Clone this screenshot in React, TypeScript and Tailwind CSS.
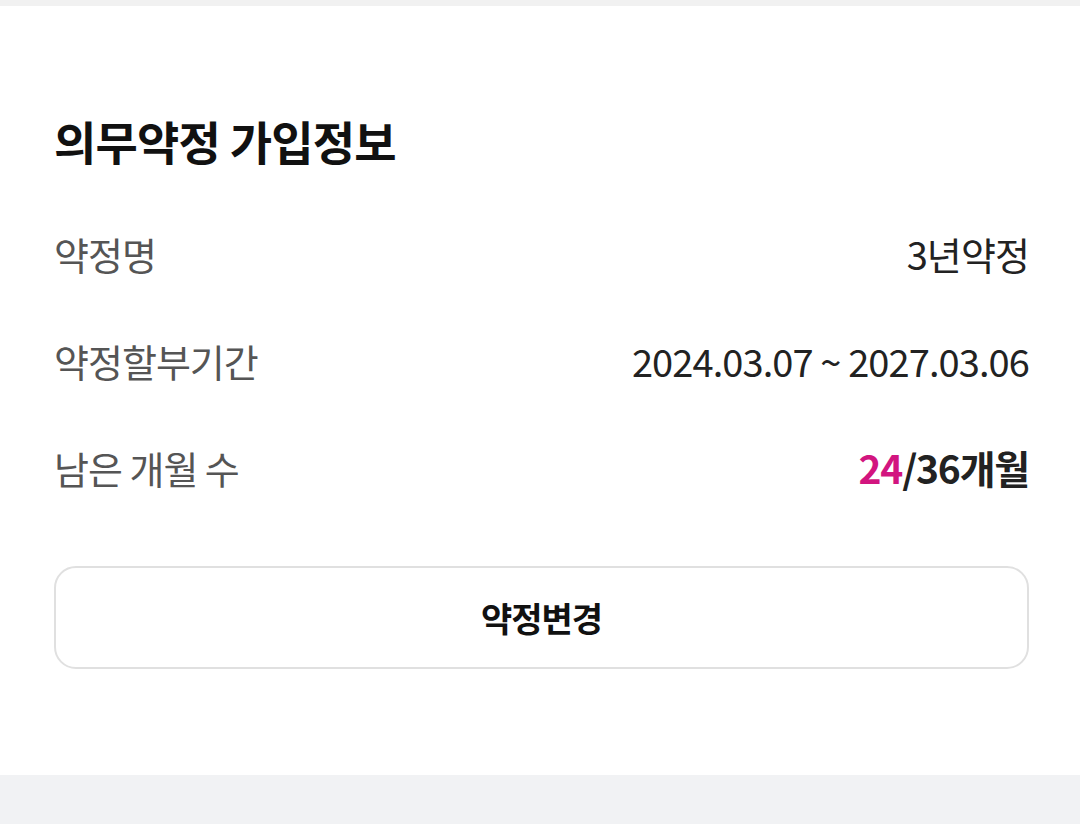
import React from 'react';

const rows = [
  { label: '약정명', value: <span>3년약정</span> },
  { label: '약정할부기간', value: <span>2024.03.07 ~ 2027.03.06</span> },
  {
    label: '남은 개월 수',
    value: (
      <span className="font-bold text-[39px] tracking-[-1.2px]">
        <span className="text-[#d2157f]">24</span>/36개월
      </span>
    ),
  },
];

export default function App() {
  return (
    <div className="min-h-screen bg-[#f1f2f4] font-['Noto_Sans_CJK_KR','Noto_Sans',sans-serif]">
      <div className="h-[6px] bg-[#f1f1f1]" />
      <div className="bg-white pl-[54px] pr-[51px] pt-[106px] pb-[106px]">
        <h1 className="text-[46px] leading-[56px] font-bold text-[#111] tracking-[-0.8px]">의무약정 가입정보</h1>
        <div className="mt-[32px]">
          {rows.map((row) => (
            <div key={row.label} className="h-[107px] flex items-center justify-between">
              <span className="text-[38px] text-[#555] tracking-[-1px]">{row.label}</span>
              <span className="text-[38px] text-[#222] tracking-[-0.9px]">{row.value}</span>
            </div>
          ))}
        </div>
        <button className="mt-[45px] w-full h-[103px] rounded-[22px] border-2 border-[#e0e0e0] bg-white text-[34px] font-bold text-[#111] tracking-[-1px]">
          약정변경
        </button>
      </div>
    </div>
  );
}
